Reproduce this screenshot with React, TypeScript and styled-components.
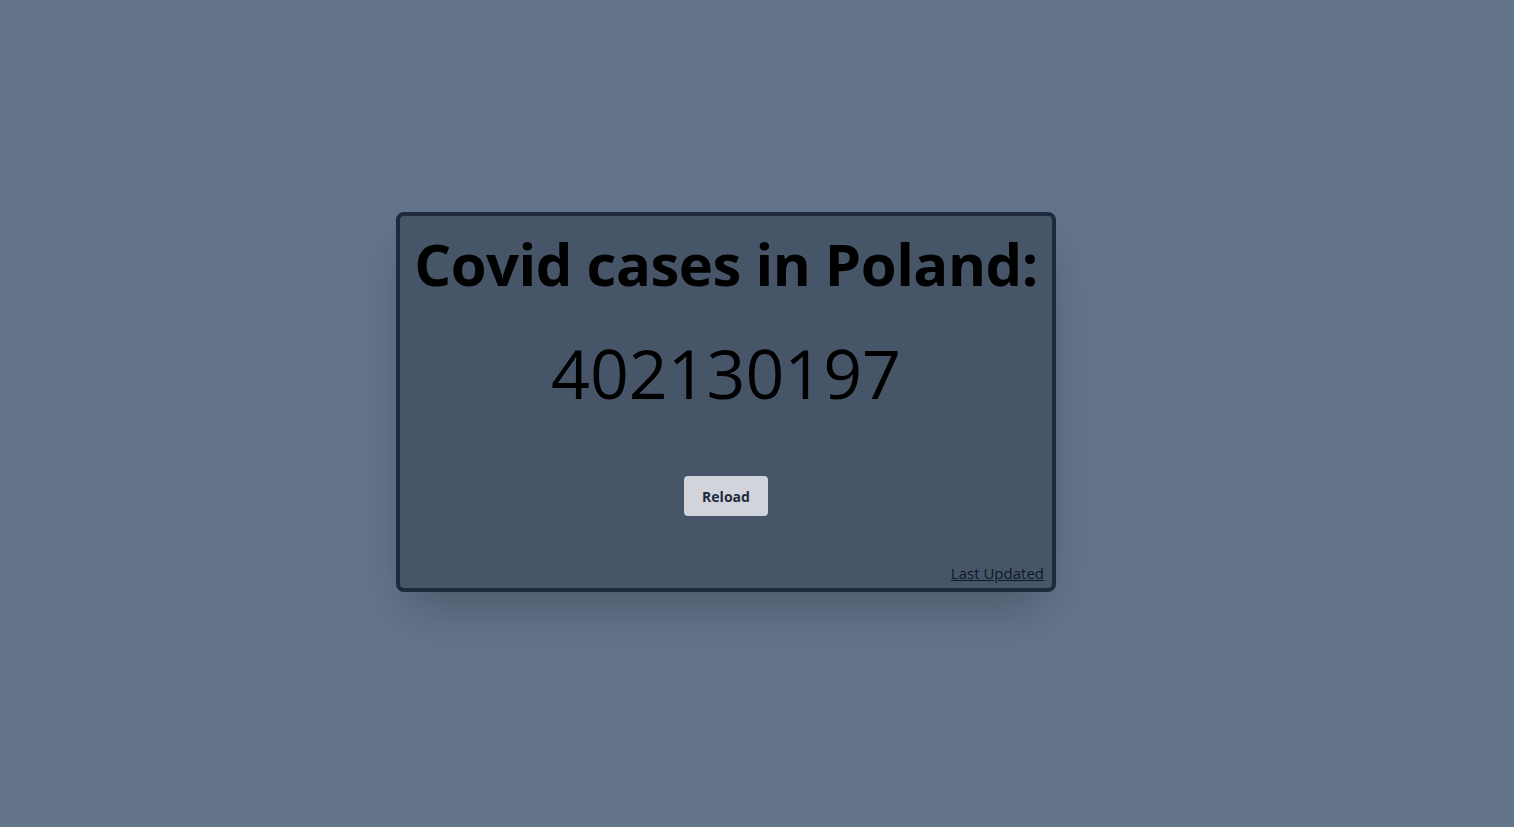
import styled, { createGlobalStyle } from 'styled-components';

const GlobalStyle = createGlobalStyle`
  html, body {
    margin: 0;
    padding: 0;
    background: #64748b;
    font-family: 'Open Sans', 'Noto Sans', sans-serif;
  }
`;

const Page = styled.main`
  min-height: 827px;
  box-sizing: border-box;
  display: flex;
  align-items: center;
  justify-content: center;
  padding: 0 62px 23px 0;
`;

const Card = styled.section`
  width: 660px;
  height: 380px;
  box-sizing: border-box;
  background: #475569;
  border: 4px solid #1e293b;
  border-radius: 8px;
  box-shadow: 0 25px 50px -12px rgb(0 0 0 / 25%);
  display: flex;
  flex-direction: column;
  align-items: center;
  padding: 16px 8px 5px;
`;

const Title = styled.h1`
  margin: 0;
  font-size: 58px;
  font-weight: 700;
  line-height: 64px;
  color: #000;
  letter-spacing: -0.5px;
`;

const Count = styled.div`
  margin-top: 37px;
  font-size: 68px;
  font-weight: 400;
  line-height: 80px;
  color: #000;
`;

const ReloadButton = styled.button`
  margin-top: 63px;
  width: 84px;
  height: 40px;
  border: none;
  border-radius: 4px;
  background: #d1d5db;
  color: #1e293b;
  font-family: inherit;
  font-size: 14px;
  font-weight: 700;
  cursor: pointer;
`;

const Footer = styled.div`
  margin-top: auto;
  align-self: stretch;
  display: flex;
  justify-content: flex-end;
`;

const UpdatedLink = styled.a`
  font-size: 15px;
  color: #0f172a;
  text-decoration: underline;
  cursor: pointer;
`;

export default function App() {
  return (
    <>
      <GlobalStyle />
      <Page>
        <Card>
          <Title>Covid cases in Poland:</Title>
          <Count>402130197</Count>
          <ReloadButton>Reload</ReloadButton>
          <Footer>
            <UpdatedLink>Last Updated</UpdatedLink>
          </Footer>
        </Card>
      </Page>
    </>
  );
}
